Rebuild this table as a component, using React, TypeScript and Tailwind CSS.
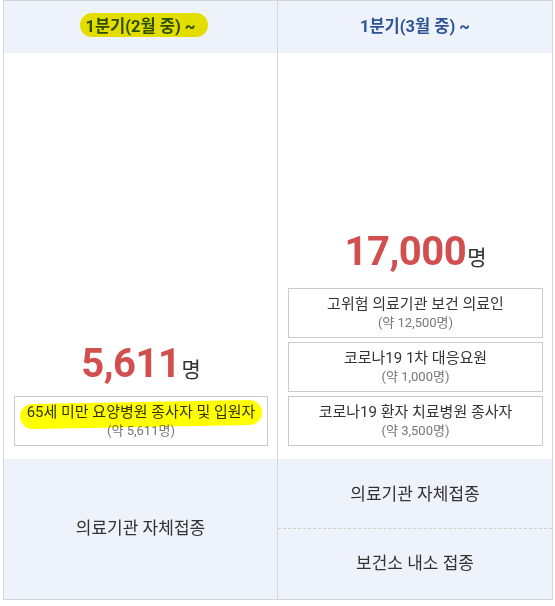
import React from 'react'

const font = { fontFamily: '"Roboto", "Noto Sans CJK KR", sans-serif' }

type Group = { title: string; count: string; mark?: boolean }

const left: Group[] = [{ title: '65세 미만 요양병원 종사자 및 입원자', count: '(약 5,611명)', mark: true }]
const right: Group[] = [
  { title: '고위험 의료기관 보건 의료인', count: '(약 12,500명)' },
  { title: '코로나19 1차 대응요원', count: '(약 1,000명)' },
  { title: '코로나19 환자 치료병원 종사자', count: '(약 3,500명)' },
]

function Box({ title, count, mark }: Group) {
  return (
    <div className="flex h-[50px] w-full flex-col items-center justify-center border border-[#c9c9d2] bg-white">
      <span className="relative text-[15px] leading-[19px] text-[#333]">
        {title}
        {mark && (
          <span className="pointer-events-none absolute -left-[7px] -right-[6px] top-[-1px] h-[25px] -rotate-[1deg] rounded-full bg-[#ffff00] mix-blend-multiply" />
        )}
      </span>
      <span className="text-[13px] leading-[17px] text-[#777]">{count}</span>
    </div>
  )
}

function Total({ value }: { value: string }) {
  return (
    <div className="mb-[12px] flex items-baseline leading-none">
      <span className="text-[40px] font-bold leading-none tracking-[-0.5px] text-[#d24f4f]">{value}</span>
      <span className="ml-[1px] text-[21px] leading-none text-[#333]">명</span>
    </div>
  )
}

export default function App() {
  return (
    <div className="min-h-[606px] bg-white px-[3px]" style={font}>
      <div className="grid w-[550px] grid-cols-[273px_275px] border border-[#d6d6d6]">
        <div className="flex h-[52px] items-center justify-center bg-[#eef2fa]">
          <span className="relative text-[16.5px] font-bold text-[#2e5597]">
            1분기(2월 중) ~
            <span className="pointer-events-none absolute -left-[5px] -right-[12px] top-[-2px] h-[24px] rounded-full bg-[#f5ea00] mix-blend-multiply" />
          </span>
        </div>
        <div className="flex h-[52px] items-center justify-center border-l border-[#d6d6d6] bg-[#eef2fa]">
          <span className="text-[16.5px] font-bold text-[#2e5597]">1분기(3월 중) ~</span>
        </div>

        <div className="flex h-[406px] flex-col items-center justify-end pb-[13px] pl-[10px] pr-[9px]">
          <Total value="5,611" />
          {left.map((g) => (
            <Box key={g.title} {...g} />
          ))}
        </div>
        <div className="flex h-[406px] flex-col items-center justify-end gap-[4px] border-l border-[#d6d6d6] pb-[13px] pl-[10px] pr-[9px]">
          <Total value="17,000" />
          {right.map((g) => (
            <Box key={g.title} {...g} />
          ))}
        </div>

        <div className="flex h-[140px] items-center justify-center bg-[#eef2fa] text-[17px] text-[#333]">
          의료기관 자체접종
        </div>
        <div className="grid h-[140px] grid-rows-2 border-l border-[#d6d6d6] bg-[#eef2fa] text-[17px] text-[#333]">
          <div className="flex items-center justify-center border-b border-dashed border-[#cfcfcf] pt-[2px]">의료기관 자체접종</div>
          <div className="flex items-center justify-center">보건소 내소 접종</div>
        </div>
      </div>
    </div>
  )
}
